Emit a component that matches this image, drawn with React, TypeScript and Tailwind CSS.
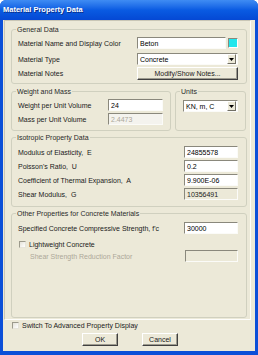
import React from 'react';

const font = { fontFamily: '"Liberation Sans", Arial, sans-serif' };

const TextBox = ({ value, className = '', tone = 'bg-white text-black' }: { value?: string; className?: string; tone?: string }) => (
  <div
    className={`flex items-center h-[12px] pl-[2px] border border-t-[#8a887c] border-l-[#8a887c] border-r-[#fbfbf8] border-b-[#fbfbf8] text-[7px] leading-none ${tone} ${className}`}
  >
    {value}
  </div>
);

const Combo = ({ value, className = '' }: { value: string; className?: string }) => (
  <div
    className={`flex items-center h-[12px] border border-t-[#8a887c] border-l-[#8a887c] border-r-[#fbfbf8] border-b-[#fbfbf8] bg-white text-[7px] leading-none ${className}`}
  >
    <span className="flex-1 pl-[2px]">{value}</span>
    <span className="flex items-center justify-center w-[9px] h-[10px] mr-[1px] bg-[#ece9d8] border border-t-white border-l-white border-r-[#716f64] border-b-[#716f64]">
      <svg width="5" height="3" viewBox="0 0 5 3">
        <path d="M0 0h5L2.5 3z" fill="#000" />
      </svg>
    </span>
  </div>
);

const Group = ({ title, className = '', children }: { title: string; className?: string; children?: React.ReactNode }) => (
  <div className={`relative border border-[#d0d0bf] rounded-[3px] ${className}`}>
    <span className="absolute -top-[5px] left-[4px] px-[1px] bg-[#ece9d8] text-[7px] leading-[9px] text-[#2a2a2a]">{title}</span>
    {children}
  </div>
);

const Row = ({ label, children, className = '', muted = false }: { label: string; children: React.ReactNode; className?: string; muted?: boolean }) => (
  <div className={`flex items-center justify-between ${className}`}>
    <span className={`whitespace-pre text-[7px] leading-none ${muted ? 'text-[#aca899]' : 'text-[#1a1a1a]'}`}>{label}</span>
    {children}
  </div>
);

const Check = ({ label, className = '' }: { label: string; className?: string }) => (
  <div className={`flex items-center gap-[3px] ${className}`}>
    <span className="w-[7px] h-[7px] border border-t-[#9c9a8c] border-l-[#9c9a8c] border-r-[#e6e4da] border-b-[#e6e4da] bg-gradient-to-br from-[#e4e2d8] to-white" />
    <span className="text-[7px] leading-none text-[#1a1a1a]">{label}</span>
  </div>
);

const Button = ({ label, className = '' }: { label: string; className?: string }) => (
  <div
    className={`flex items-center justify-center h-[13px] bg-[#ece9d8] border border-t-white border-l-white border-r-[#404040] border-b-[#404040] shadow-[inset_-1px_-1px_0_#9d9b8f] text-[7px] leading-none text-[#1a1a1a] ${className}`}
  >
    {label}
  </div>
);

export default function App() {
  return (
    <div style={font} className="w-[258px] h-[355px] flex flex-col bg-[#0b4fd8] rounded-t-[6px] overflow-hidden">
      <div className="h-[20px] flex items-center pl-[3px] bg-gradient-to-b from-[#3f8cf3] via-[#0a5be2] to-[#0548d4]">
        <span className="text-white font-bold text-[7.5px] leading-none [text-shadow:1px_1px_0_#0a2f8a]">Material Property Data</span>
      </div>
      <div className="flex-1 mx-[3px] mb-[4px] bg-[#ece9d8] flex flex-col">
        <div className="ml-[1px] w-[247px] h-[300px] border border-t-[#c9c6b6] border-l-[#c9c6b6] border-r-[#fdfdfb] border-b-[#fdfdfb] pl-[6px] pt-[8px] flex flex-col">
          <Group title="General Data" className="w-[236px] h-[55px] pt-[7px] pl-[6px] pr-[8px]">
            <Row label="Material Name and Display Color">
              <div className="flex items-center gap-[2px]">
                <TextBox value="Beton" className="w-[89px]" />
                <span className="w-[10px] h-[10px] bg-[#22e6ec] border border-t-[#8a887c] border-l-[#8a887c] border-r-white border-b-white" />
              </div>
            </Row>
            <Row label="Material Type" className="mt-[4px]">
              <Combo value="Concrete" className="w-[101px]" />
            </Row>
            <Row label="Material Notes" className="mt-[2px]">
              <Button label="Modify/Show Notes..." className="w-[101px]" />
            </Row>
          </Group>

          <div className="flex mt-[7px] gap-[4px]">
            <Group title="Weight and Mass" className="w-[160px] h-[40px] pt-[7px] pl-[6px] pr-[7px]">
              <Row label="Weight per Unit Volume">
                <TextBox value="24" className="w-[55px]" />
              </Row>
              <Row label="Mass per Unit Volume" className="mt-[2px]">
                <TextBox value="2.4473" className="w-[55px]" tone="bg-[#f4f3ee] text-[#aca899]" />
              </Row>
            </Group>
            <Group title="Units" className="w-[71px] h-[40px] pt-[8px] pl-[7px]">
              <Combo value="KN, m, C" className="w-[55px]" />
            </Group>
          </div>

          <Group title="Isotropic Property Data" className="w-[236px] h-[70px] mt-[6px] pt-[8px] pl-[6px] pr-[8px]">
            <Row label="Modulus of Elasticity,  E">
              <TextBox value="24855578" className="w-[54px]" />
            </Row>
            <Row label="Poisson's Ratio,  U" className="mt-[2px]">
              <TextBox value="0.2" className="w-[54px]" />
            </Row>
            <Row label="Coefficient of Thermal Expansion,  A" className="mt-[2px]">
              <TextBox value="9.900E-06" className="w-[54px]" />
            </Row>
            <Row label="Shear Modulus,  G" className="mt-[2px]">
              <TextBox value="10356491" className="w-[54px]" tone="bg-[#ece9d8] text-[#222]" />
            </Row>
          </Group>

          <Group title="Other Properties for Concrete Materials" className="w-[236px] h-[105px] mt-[6px] pt-[8px] pl-[6px] pr-[8px]">
            <Row label="Specified Concrete Compressive Strength, f'c">
              <TextBox value="30000" className="w-[54px]" />
            </Row>
            <Check label="Lightweight Concrete" className="mt-[7px] ml-[1px]" />
            <Row label="Shear Strength Reduction Factor" className="mt-[2px] pl-[12px]" muted>
              <TextBox className="w-[53px]" tone="bg-[#ece9d8]" />
            </Row>
          </Group>
        </div>

        <Check label="Switch To Advanced Property Display" className="mt-[2px] ml-[9px]" />
        <div className="flex mt-[4px] ml-[79px] gap-[24px]">
          <Button label="OK" className="w-[36px]" />
          <Button label="Cancel" className="w-[36px]" />
        </div>
      </div>
    </div>
  );
}
